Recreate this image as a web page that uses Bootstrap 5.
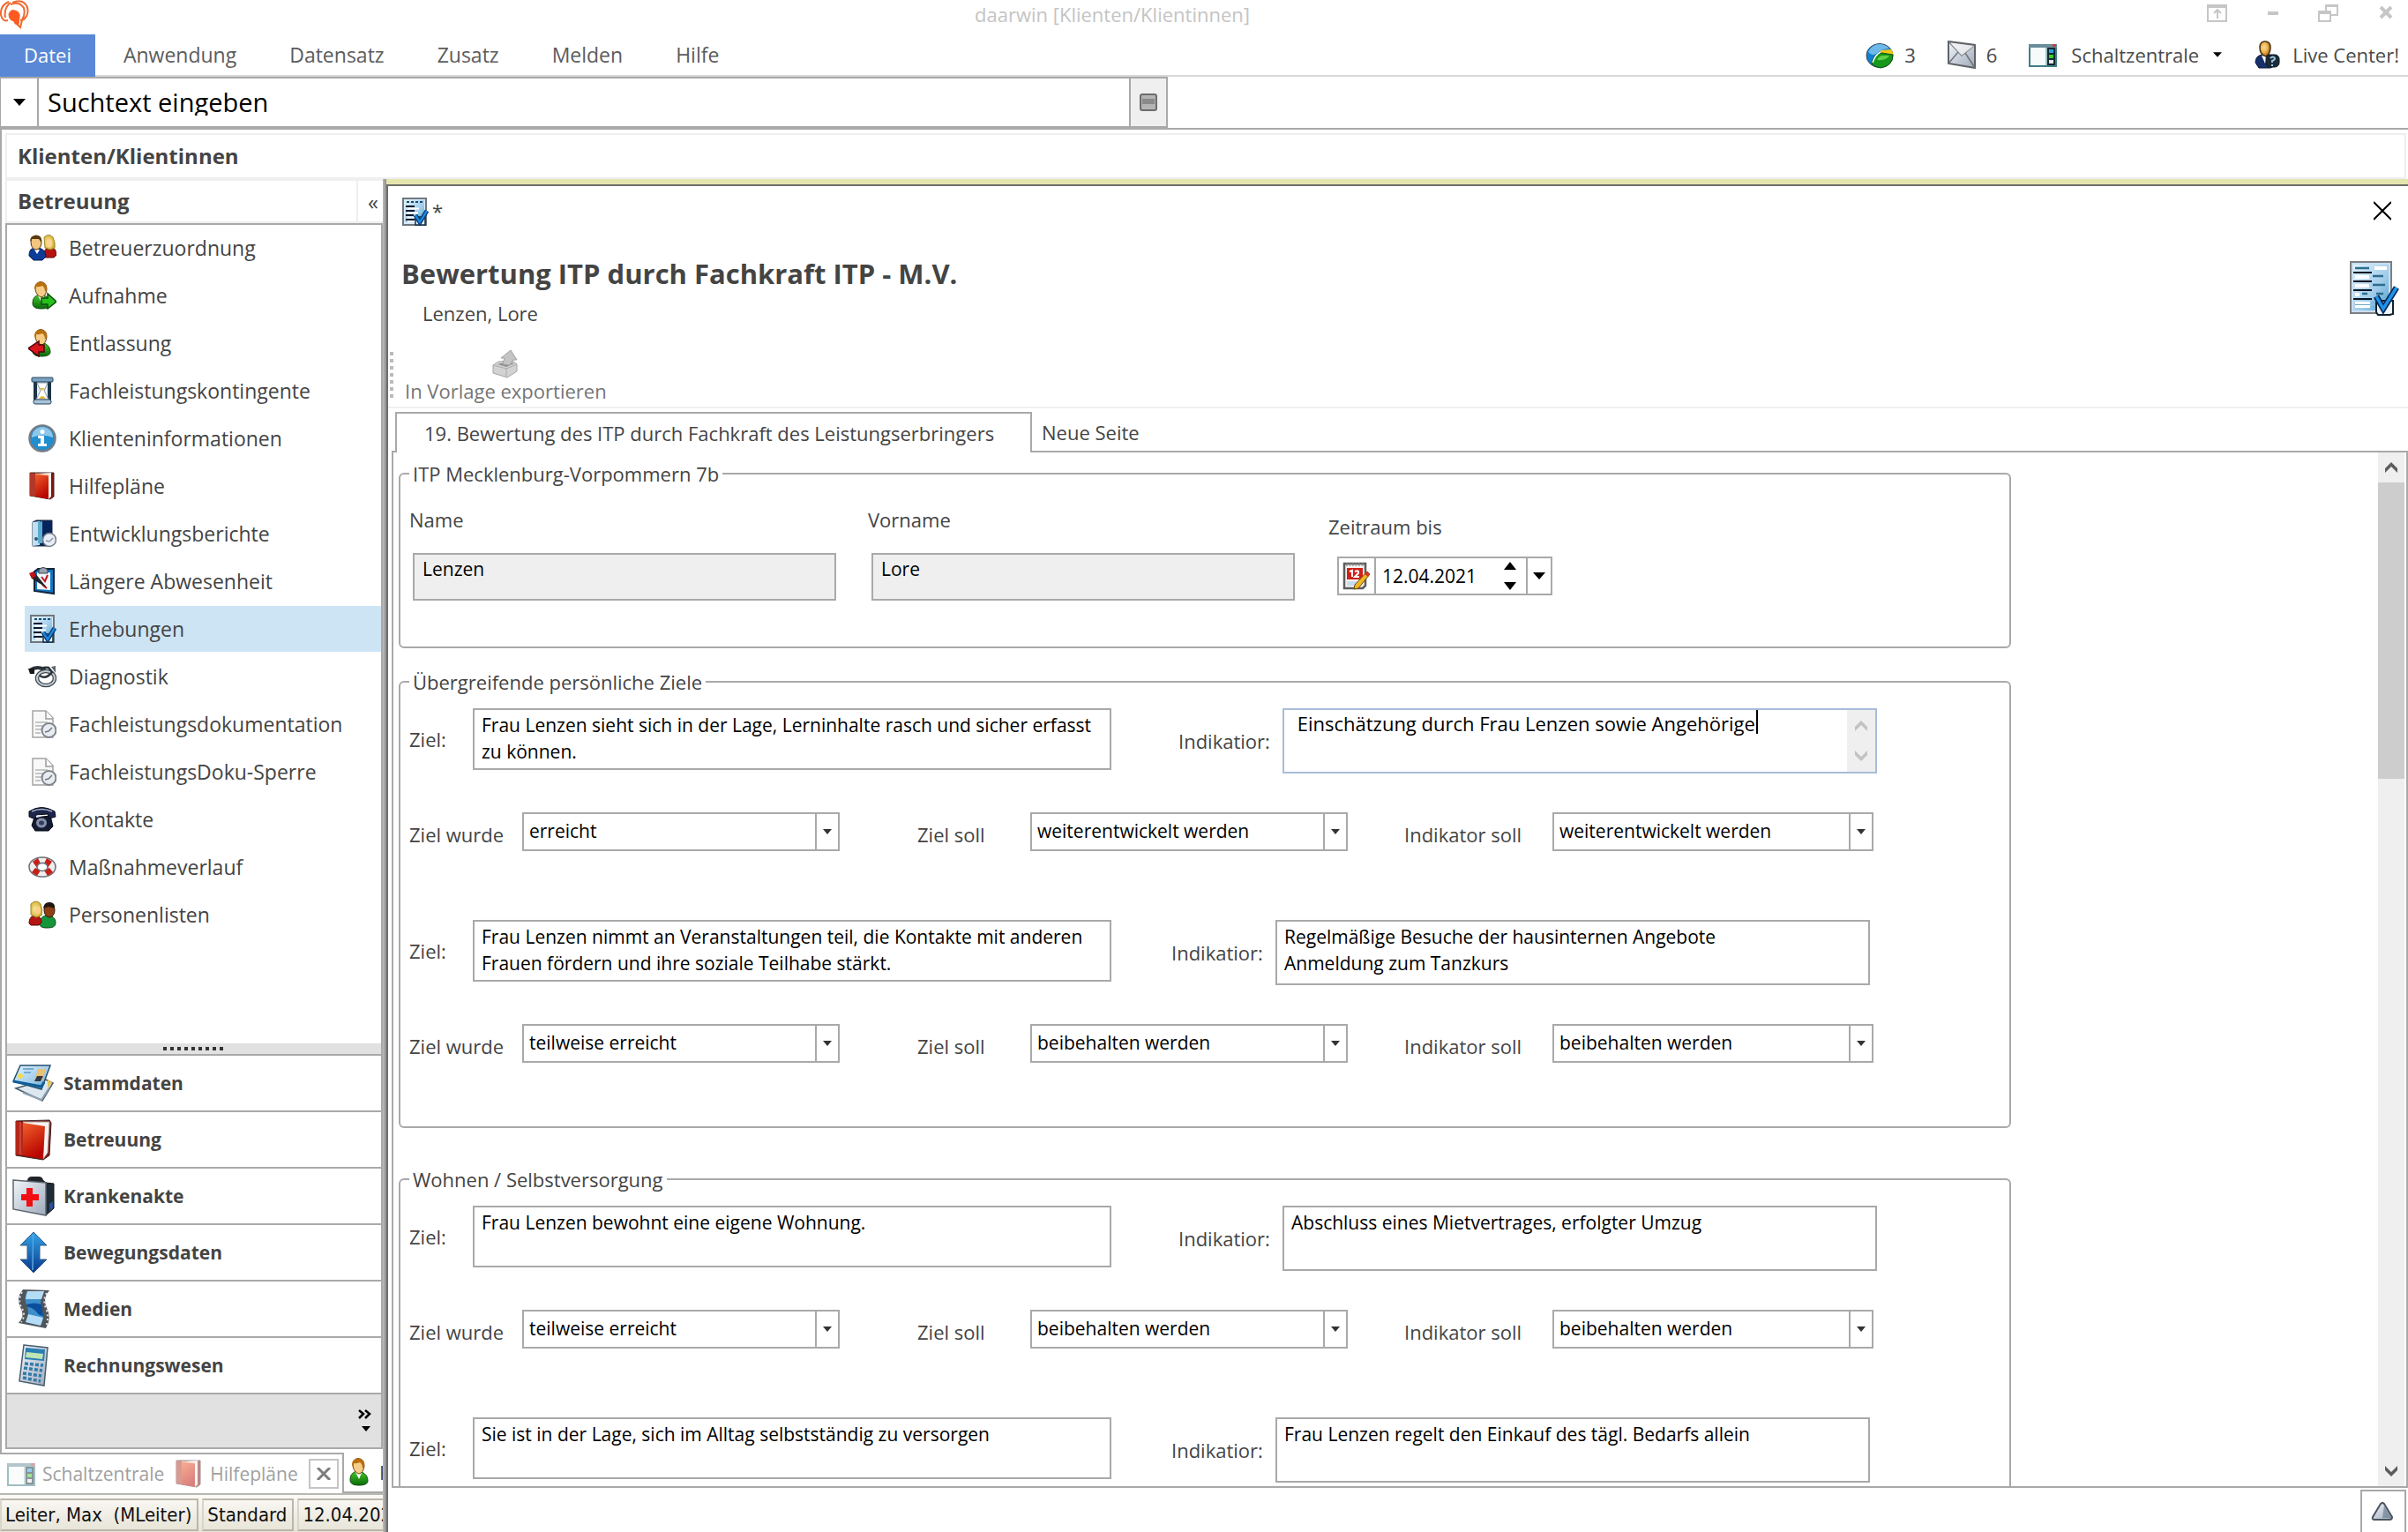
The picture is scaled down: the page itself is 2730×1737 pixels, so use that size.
<!DOCTYPE html>
<html lang="de">
<head>
<meta charset="utf-8">
<meta name="viewport" content="width=device-width, initial-scale=1">
<title>daarwin [Klienten/Klientinnen]</title>
<link href="https://cdn.jsdelivr.net/npm/bootstrap@5.3.0/dist/css/bootstrap.min.css" rel="stylesheet">
<style>
:root{--line:#a9a9a9;--soft:#efefef;--ink:#444}
body{font-family:"Open Sans","Noto Sans",sans-serif;font-size:22px;line-height:30px;color:var(--ink);background:#fff;overflow:hidden}
svg{flex:none;display:block}
button{font:inherit;color:inherit;background:none;border:0;padding:0}
a{color:inherit;text-decoration:none}
.ic{width:32px;height:32px}
.ic-lg{width:48px;height:48px}
.fill-rest{flex:1 1 0;min-height:0}
/* title bar and menu */
.caption-bar{height:39px;color:#c4c4c4;line-height:32px}
.caption-tools{width:241px;padding-left:13px;gap:45px}
.menu-bar{height:48px;border-bottom:2px solid #d8d8d8;color:#5c5c5c}
.menu-bar .nav-link{color:inherit;padding:8px 30px;font-size:23px}
.menu-bar .file-tab{background:#5b88d6;color:#fff;height:48px;padding:8px 27px;margin-right:2px;font-size:22px}
.menu-status{color:#4a4a4a;gap:36px;padding-right:10px}
.menu-status .tally{gap:12px}
/* search */
.search-row{height:60px;border-bottom:2px solid var(--line)}
.search-box{width:1324px;border:2px solid var(--line);border-left-width:1px}
.search-box .drop{width:43px;border-right:2px solid var(--line)}
.search-box input{font-size:29px;color:#000;border:0;padding:0 10px;outline:0;min-width:0}
.search-box .go{width:42px;background:#efefef;border-left:2px solid var(--line)}
/* page header */
.page-head{height:56px;padding:4px 2px 0 4px;border-left:2px solid var(--line)}
.page-head h1{font-size:24px;line-height:48px;padding-left:12px;margin:0;font-weight:700;border:2px solid var(--soft)}
/* sidebar */
.side{width:434px}
.side-frame{border-left:2px solid var(--line);padding:0 0 4px 4px}
.side-head{border:2px solid var(--soft);border-right:0;height:50px}
.side-head h2{font-size:24px;line-height:46px;padding-left:12px;margin:0;font-weight:700}
.side-head button{width:30px;border-left:2px solid var(--soft);font-size:24px;padding:2px 0 0 6px}
.side-box{border:2px solid var(--line)}
.side-list a{height:52px;margin:0 0 2px 20px;padding-left:4px;gap:14px;font-size:23px}
.side-list a.current{background:#cde4f5}
.grip{height:12px;background:#e1e1e1}
.group-link{height:64px;border-top:2px solid var(--line);font-size:21px;font-weight:700;padding-left:6px;gap:10px}
.side-more{height:62px;border-top:2px solid var(--line);background:#e1e1e1;padding-right:10px}
.doc-tabs{height:46px}
.doc-tabs .idle{width:388px;border-top:2px solid var(--line);color:#a0a0a0;padding-left:8px;gap:8px;font-size:21px}
.doc-tabs .idle svg{opacity:.5}
.doc-tabs .closer{width:34px;height:34px;border:2px solid #c4c4c4}
.doc-tabs .live{border-left:2px solid var(--line);border-bottom:2px solid var(--line);padding-left:2px;gap:6px}
.status{height:44px;border-top:2px solid #b9b8b0;background:linear-gradient(#fbfaf6,#e6e3d6);padding-top:4px;gap:4px;font-family:"DejaVu Sans Condensed",sans-serif;color:#111;white-space:pre}
.status span{border:2px solid #b9b7aa;border-left-color:#d8d6cb;height:37px;padding:0 6px 0 4px;line-height:34px}
/* dialog window */
.edge{width:4px;background:linear-gradient(90deg,#bdbdbd,#8d8d8d)}
.dialog-win{border-top:6px solid #e5e5ae;min-width:0}
.dialog-inner{border:solid #6e6e66;border-width:2px 0 0 2px;background:#fff}
.dialog-cap{height:58px;padding:13px 19px 0 14px}
.dialog-head{padding:19px 10px 0 15px}
.dialog-head h3{font-size:31px;line-height:44px;font-weight:700;margin:0 0 8px}
.dialog-head p{margin:0;padding-left:24px}
.tool-strip{margin-top:25px;height:68px;border-bottom:2px solid #f1f1f1;padding:2px 0 0 2px}
.tool-strip .dots{width:4px;height:54px;margin-top:2px;background:repeating-linear-gradient(#bbb 0 4px,transparent 4px 8px)}
.tool-strip button{margin-left:13px;line-height:28px;color:#757575}
.sheet-tabs{margin:4px 0 -2px 8px;height:46px;position:relative}
.sheet-tabs button{padding:0 14px 0 11px}
.sheet-tabs .on{width:722px;border:2px solid var(--line);border-bottom:0;background:#fff;padding:0 14px 0 31px}
.sheet{margin-left:4px;border:2px solid var(--line)}
.sheet-body{padding:9px 6px 0 6px;overflow:hidden}
.sheet-scroll{width:30px;margin-right:2px;background:#efefef}
.sheet-scroll .thumb{height:336px;background:#cdcdcd}
.sheet-scroll button{height:34px}
.dialog-foot{height:50px;padding:2px 2px 0 0}
.dialog-foot button{width:52px;border:2px solid var(--line);border-bottom:0;padding-left:10px}
/* form groups */
.group{max-width:1828px;border:2px solid var(--line);border-radius:6px;padding-left:10px}
.group legend{float:none;width:auto;font-size:22px;line-height:30px;margin:0;padding:0 4px}
.group-person{margin-bottom:23px;padding-bottom:52px}
.group-goals{margin-bottom:43px;padding-bottom:72px}
.person-col{width:520px;padding-top:22px}
.person-col input{margin:23px 0 0 4px;width:480px;height:54px;border:2px solid var(--line);background:#efefef;color:#000;font-size:21px;padding:0 9px 18px}
.period{padding:30px 0 0 2px}
.date-box{margin:19px 0 0 10px;width:244px;height:44px;border:2px solid var(--line)}
.date-box .cal{width:42px;border-right:2px solid var(--line)}
.date-box input{width:134px;border:0;outline:0;color:#000;font-size:21px;padding:0 0 0 7px}
.date-box .spin{width:36px}
.date-box .pick{width:28px;border-left:2px solid var(--line)}
.goal-text{padding-top:15px}
.goal-text label{flex:none}
.goal-text .aim{height:70px}
.goal-text .aim label{width:72px}
.goal-text .mark-by{height:74px;margin-left:76px}
.goal-text .mark-by label{width:118px}
.goal-text.near .mark-by{margin-left:68px}
.goal-text textarea{display:block;resize:none;overflow:hidden;border:2px solid var(--line);color:#000;background:#fff;font-size:21px;line-height:30px;padding:2px 8px;outline:0}
.aim textarea{width:724px;height:70px}
.mark-by textarea{width:674px;height:74px}
.active-box{width:674px;height:74px;border:2px solid #a9bcd9;position:relative}
.active-box textarea{flex:1;width:auto;height:70px;border:0;font-size:22px;padding:0 4px 0 9px;min-width:0}
.active-box .rail{width:32px;background:#efefef}
.caret{position:absolute;left:535px;top:0;width:2px;height:27px;background:#000}
.goal-pick{margin-top:44px;margin-bottom:63px}
.goal-pick:last-child{margin-bottom:0}
.goal-pick label{width:128px;padding-top:10px}
.goal-pick select{width:360px;height:44px;border:2px solid var(--line);border-radius:0;color:#000;font-size:21px;padding:0 34px 2px 6px;appearance:none;outline:0;background:url("data:image/svg+xml,%3Csvg xmlns='http://www.w3.org/2000/svg' width='10' height='6'%3E%3Cpath d='M0 0h10L5 6z' fill='%23333'/%3E%3C/svg%3E") no-repeat right 7px center,linear-gradient(var(--line),var(--line)) no-repeat right 24px top/2px 100%,#fff}
.goal-pick .second{margin-left:88px}
.goal-pick .third{margin-left:64px}
.goal-pick .third label{width:168px}
.goal-pick .third select{width:364px}
</style>
</head>
<body>
<svg width="0" height="0" class="position-absolute" aria-hidden="true">
<defs>
<linearGradient id="gRed" x1="0" y1="0" x2="0.4" y2="1"><stop offset="0" stop-color="#f2602a"/><stop offset="1" stop-color="#b80500"/></linearGradient>
<linearGradient id="gBlue" x1="0" y1="0" x2="0" y2="1"><stop offset="0" stop-color="#33a5e8"/><stop offset="1" stop-color="#06378f"/></linearGradient>
<linearGradient id="gSky" x1="0" y1="0" x2="1" y2="1"><stop offset="0" stop-color="#e2f3ff"/><stop offset=".6" stop-color="#9fcbea"/><stop offset="1" stop-color="#4aa0c8"/></linearGradient>
<linearGradient id="gSteel" x1="0" y1="0" x2="1" y2="1"><stop offset="0" stop-color="#f2f6fb"/><stop offset="1" stop-color="#9fa9bb"/></linearGradient>
<linearGradient id="gGreen" x1="0" y1="0" x2="0" y2="1"><stop offset="0" stop-color="#46c828"/><stop offset="1" stop-color="#0a6a0c"/></linearGradient>
<radialGradient id="gHair" cx=".4" cy=".4" r=".7"><stop offset="0" stop-color="#fbd79a"/><stop offset=".45" stop-color="#eeb650"/><stop offset="1" stop-color="#8a4b08"/></radialGradient>
<radialGradient id="gBlond" cx=".4" cy=".5" r=".7"><stop offset="0" stop-color="#fde9a2"/><stop offset="1" stop-color="#c9a113"/></radialGradient>
</defs>
<symbol id="i-pair" viewBox="0 0 32 32"><path d="M18 24c0-6 3-9 7-9s7 4 7 9l-3 3H18z" fill="#b5120e" stroke="#5c0808"/><path d="M18 4q5-5 10 0 3 6 2 12l-5 2-6-2z" fill="url(#gBlond)" stroke="#9b8a2a"/><ellipse cx="24" cy="11" rx="3" ry="4.500" fill="#fbd596"/><path d="M1 25c0-7 3-9 8-9s11 2 11 10l-4 4H6z" fill="#0c3c98" stroke="#051c52"/><path d="M7 18l3 5 3-5z" fill="#fff"/><ellipse cx="9" cy="10" rx="6" ry="8" fill="#f3c67f" stroke="#5a3a10"/><path d="M2 9q0-8 8-7 6 0 5 8l-3-4-8 0z" fill="#58380f"/></symbol>
<symbol id="i-person" viewBox="0 0 32 32"><path d="M5 25c0-6 3-9 8-10 6 0 12 4 12 11 0 3-3 5-10 5S5 29 5 25z" fill="url(#gGreen)" stroke="#124d10"/><path d="M11 16l4 8 3-7z" fill="#fff"/><path d="M8 9q0-8 6-8.500Q21 1 21 9q-1 8-6 9-6-2-7-9z" fill="#f6cd86" stroke="#6a4212"/><path d="M7 10Q6 1 14 .5 22 1 21 9l-2 3q0-5-3-7-5 2-7 1z" fill="#b8700f"/></symbol>
<symbol id="i-in" viewBox="0 0 32 32"><use href="#i-person"/><path d="M15 19h7v-5l10 9-10 8v-5h-7z" fill="#27c01c" stroke="#0b4f08" stroke-width="1.500"/></symbol>
<symbol id="i-out" viewBox="0 0 32 32"><use href="#i-person"/><path d="M18 18h-6v-4L0 22l12 9v-5h6z" fill="#d8141c" stroke="#4f0508" stroke-width="1.500"/></symbol>
<symbol id="i-glass" viewBox="0 0 32 32"><path d="M6 6h20v22H6z" fill="#e8eef4"/><path d="M6 6h4v21H6zM22 6h4v21h-4z" fill="#1c3547"/><path d="M10 7h12l-4 9 5 10H9l5-10z" fill="#fff" stroke="#8a9cab"/><path d="M13 13h6l-3 3zM12 25q4-6 8 0z" fill="#e6b43c"/><rect x="4" y="1" width="24" height="5" rx="1" fill="#7ba2c0" stroke="#26455c"/><rect x="6" y="26" width="20" height="5" rx="2" fill="#a9c4d8" stroke="#26455c"/></symbol>
<symbol id="i-info" viewBox="0 0 32 32"><circle cx="16" cy="16" r="14.500" fill="#1f8fd0" stroke="#727d86" stroke-width="2.500"/><path d="M4 15a12 12 0 0 1 24 0q-12-5-24 0z" fill="#8cc7ea"/><circle cx="16" cy="8.500" r="2.500" fill="#fff"/><path d="M11 13h7v9h3v3H11v-3h3v-6h-3z" fill="#fff"/></symbol>
<symbol id="i-book" viewBox="0 0 32 32"><path d="M2 1h27v27l-4 3-23-4z" fill="#7d1510" stroke="#3e2a28"/><path d="M9 2l17-1v27l-3 3-2-1z" fill="#f6efec"/><path d="M8 2l15 2v27L8 28z" fill="url(#gRed)"/><path d="M2 1l6 1v26l-6-1z" fill="#b3372a"/><path d="M8 2l15 2" stroke="#ffb28c"/></symbol>
<symbol id="i-binder" viewBox="0 0 32 32"><path d="M5 3l4-2h18v24l-4 5H5z" fill="#06245c" stroke="#1d2a3c"/><path d="M5 3l8-1v27l-8 1z" fill="#bfe0f2"/><path d="M11 3l5-1v25h-5z" fill="#5cabcf"/><circle cx="9" cy="22" r="2" fill="#37576c"/><circle cx="24" cy="23" r="7.500" fill="#e9edf5" stroke="#737b8a" stroke-width="1.500"/><path d="M20 24l4 1 4-4" fill="none" stroke="#8d96a6" stroke-width="1.500"/></symbol>
<symbol id="i-clip" viewBox="0 0 32 32"><path d="M7 5l4-3h18v28l-22-3z" fill="#1176c0" stroke="#12233c" stroke-width="2"/><path d="M10 6h15v20l-15-1z" fill="#f3f8fc"/><path d="M12 3q5-5 10 0v4H12z" fill="#99a2ac" stroke="#38424e"/><path d="M15 11l4 5 3-7M16 20l5 4" fill="none" stroke="#c3131a" stroke-width="2"/><path d="M2 8l5-2 14 17-4-2L4 13z" fill="#23252c"/><path d="M1 7l5-2 3 5-5 3z" fill="#c4121a"/></symbol>
<symbol id="i-form" viewBox="0 0 32 32"><path d="M3 1h26v30H3z" fill="#d7eaf8" stroke="#70777e" stroke-width="2"/><path d="M5 3h22v25H5z" fill="url(#gSky)"/><path d="M7 5h3M12 5h3M17 5h3M22 5h3" stroke="#174c6a" stroke-width="2"/><path d="M6 10h10M6 15h10M6 20h9M6 25h10" stroke="#0b1a2c" stroke-width="2"/><path d="M8 12.500h13M8 17.500h12M8 22.500h8M8 27h9" stroke="#fff" stroke-width="2"/><path d="M17 22h11v9H17z" fill="#e7f3fb" stroke="#142b3c" stroke-width="1.500"/><path d="M17 20l5 8 8-13" fill="none" stroke="#06346a" stroke-width="5"/><path d="M17 20l5 8 8-13" fill="none" stroke="#1b86dc" stroke-width="2.500"/></symbol>
<symbol id="i-form-lg" viewBox="0 0 56 62"><path d="M1 1h46v58H1z" fill="#c9def0" stroke="#7c7f82" stroke-width="2"/><path d="M4 4h40v52H4z" fill="url(#gSky)"/><path d="M6 8h16M26 17h12M26 27h14M14 37h6M30 37h8" stroke="#2b6c8c" stroke-width="2.500"/><path d="M4 13h21M4 23h21M4 33h21M4 43h21" stroke="#0a1422" stroke-width="2"/><path d="M28 6h14v4H28zM6 16h16v4H6zM6 26h16v4H6zM6 36h5v4H6zM6 46h17v7H6z" fill="#fff"/><path d="M6 49.500h17M28 47h-3M28 52h-3" stroke="#6fa3c4"/><path d="M30 45h19v15l-4 1H32l-2-3z" fill="#f2f7fa" stroke="#10222f" stroke-width="2"/><path d="M30 40l8 14 15-24" fill="none" stroke="#082a5a" stroke-width="7"/><path d="M30 40l8 14 15-24" fill="none" stroke="#1f93ea" stroke-width="3.500"/></symbol>
<symbol id="i-steth" viewBox="0 0 32 32"><path d="M2 9q9-6 17 0" fill="none" stroke="#2b333b" stroke-width="4"/><path d="M0 7h7v6H2z" fill="#15191e"/><ellipse cx="20" cy="18" rx="10" ry="8" fill="none" stroke="#3d464e" stroke-width="4.500"/><ellipse cx="20" cy="18" rx="10" ry="8" fill="none" stroke="#c3ccd3" stroke-width="2"/><path d="M13 15q7 5 14-4l-4-5q-7-1-9 2" fill="none" stroke="#2b333b" stroke-width="2.500"/><path d="M26 5l5-1v8z" fill="#5b666f"/></symbol>
<symbol id="i-doc" viewBox="0 0 32 32"><path d="M5 1h15l8 8v22H5z" fill="#f8f8f8" stroke="#a4a4a4" stroke-width="1.500"/><path d="M20 1v9h8" fill="#fff" stroke="#9a9a9a" stroke-width="1.500"/><path d="M8 14h14M8 18h9M8 22h7M8 26h6" stroke="#c6c6c6" stroke-width="2"/><circle cx="23.500" cy="23" r="8" fill="#e8ecf0" stroke="#7c848c" stroke-width="2"/><path d="M19 25l4-1 4-4" fill="none" stroke="#6f7880" stroke-width="1.500"/></symbol>
<symbol id="i-phone" viewBox="0 0 32 32"><path d="M7 14l18-2 3 12-5 5H8l-4-6z" fill="#151b33" stroke="#050812"/><path d="M1 7q14-9 29 0l1 6-7 2-2-5-13 1-1 5-7-3z" fill="#1d264a" stroke="#060916"/><ellipse cx="15" cy="20" rx="6" ry="5.500" fill="#8790ab"/><ellipse cx="15" cy="20" rx="3" ry="2.500" fill="#333c5c"/><path d="M4 7q11-5 23 0" stroke="#aab3d0" fill="none" stroke-width="1.500"/><path d="M9 13l5-1" stroke="#e4e8f5" stroke-width="2"/></symbol>
<symbol id="i-ring" viewBox="0 0 32 32"><ellipse cx="16" cy="16" rx="15" ry="11" fill="#eceeef" stroke="#6c7074" stroke-width="1.500"/><path d="M5 10l6-4 4 8-5 3zM27 10l-6-4-4 8 5 3zM4 22l6 4 4-6-6-3zM28 22l-6 4-4-6 6-3z" fill="#c81d16"/><ellipse cx="16" cy="16" rx="6" ry="4.500" fill="#fff" stroke="#6c7074" stroke-width="1.500"/></symbol>
<symbol id="i-people" viewBox="0 0 32 32"><path d="M13 26c0-6 4-9 9-9s9 3 9 8-4 6-10 6-8-2-8-5z" fill="#14953a" stroke="#0b4a18"/><ellipse cx="24" cy="11" rx="6" ry="8" fill="#8e3f14" stroke="#32180a"/><path d="M17 9q1-8 8-7 6 1 5 7l-7-2z" fill="#20160f"/><path d="M1 26c0-6 3-9 7-9s7 3 7 8l-3 3H3z" fill="#b51512" stroke="#5c0808"/><path d="M3 4q6-6 11 0 3 7 1 13l-6 2-6-3z" fill="url(#gBlond)" stroke="#9b8a2a"/><ellipse cx="11" cy="11" rx="3" ry="4.500" fill="#fbd08c"/></symbol>
<symbol id="i-cards" viewBox="0 0 48 48"><path d="M4 30l30 14 12-20-8-4z" fill="#dde7ef" stroke="#4b5c6a" stroke-width="1.500"/><path d="M12 35l21 8 9-14" fill="none" stroke="#8fa3b4" stroke-width="2"/><path d="M40 20l5 3-5 7z" fill="#e4c455"/><path d="M9 4h34L33 31 1 22z" fill="url(#gSky)" stroke="#27506e" stroke-width="1.500"/><path d="M1 22l32 6 3-5" fill="none" stroke="#0f5d9a" stroke-width="3"/><path d="M29 8h9l-4 13h-9z" fill="#e9c177"/><path d="M28 16h7l-3 6h-7z" fill="#2e3b44"/><circle cx="9" cy="16" r="3" fill="#efdc55"/><path d="M12 8h12M13 12h8" stroke="#5a9cc8" stroke-width="1.500"/></symbol>
<symbol id="i-book-lg" viewBox="0 0 48 48"><path d="M4 3l38-1 2 3-2 37-7 5-31-5z" fill="#861008" stroke="#3e2a28"/><path d="M12 4h30l-2 35-5 7z" fill="#f8f4f2" stroke="#a79b98"/><path d="M12 5l25 4-2 37-23-4z" fill="url(#gRed)"/><path d="M4 3l8 2v37l-8-1z" fill="#b3271b"/><path d="M9 4v37" stroke="#e0644c"/></symbol>
<symbol id="i-kit" viewBox="0 0 48 48"><path d="M17 6q1-4 5-4h8q4 0 5 4l4 3H14z" fill="#202429"/><path d="M38 9l9 1v28l-9 8z" fill="#1f2b35" stroke="#101820"/><path d="M1 6l37 3v37L1 39z" fill="url(#gSteel)" stroke="#5d6770" stroke-width="1.500"/><path d="M16 15h7v7h7v7h-7v7h-7v-7h-6v-7h6z" fill="#f20d12"/><path d="M42 33l4-3v8l-4 3z" fill="#2a4f96"/></symbol>
<symbol id="i-updown" viewBox="0 0 48 48"><path d="M24 1l15 15h-8v16h8L24 47 9 32h8V16H9z" fill="url(#gBlue)" stroke="#3a5d80"/><path d="M23 4l1 0v40h-2z" fill="#7cc4ee" opacity=".6"/></symbol>
<symbol id="i-film" viewBox="0 0 48 48"><path d="M12 2l30 1q-8 9-3 20 6 12-1 23L7 40q8-8 2-18-5-11 3-20z" fill="#50555a"/><path d="M17 4l19 0q-6 9-3 19 4 12-1 20l-17-4q5-8 2-17-5-11 0-18z" fill="#3c8fcb"/><path d="M17 4h19l-3 9-18 0zM15 39l3-9 17 4-3 9z" fill="#b5dcf6"/><path d="M16 19q9-3 17 0l2 13q-5 0-8-5-5-5-10-5z" fill="#0b4f9c"/><path d="M11 5q-5 8-1 17 6 9 0 17M39 6q-5 8-1 17 4 12 0 21" fill="none" stroke="#e1e4e7" stroke-width="2" stroke-dasharray="2 3"/></symbol>
<symbol id="i-calc" viewBox="0 0 48 48"><path d="M13 1l27 3-4 43-28-5z" fill="url(#gSteel)" stroke="#46606f" stroke-width="1.500"/><path d="M15 4l22 2-1 13-22-2z" fill="#2a7fb4"/><path d="M16 9l19 2-1 6-19-2z" fill="#bfe6b4"/><path d="M14 22l21 2M13 27l21 3M12 33l21 3M12 38l20 4" stroke="#2f7ba8" stroke-width="3.500" stroke-dasharray="4 2"/></symbol>
<symbol id="i-panel" viewBox="0 0 32 32"><path d="M1 5h30v24H1z" fill="#f6fafa" stroke="#3f7f86" stroke-width="2"/><path d="M0 4h32v4H0z" fill="#6a8d9a"/><path d="M27 4h4v3h-4z" fill="#d23a36"/><path d="M19 8h2v20h-2z" fill="#9dc3c6"/><path d="M21 8h9v20h-9z" fill="#132a34"/><path d="M23 10h5v4h-5z" fill="#2e9fe4"/><path d="M23 16h5v4h-5z" fill="#3bd01e"/><path d="M23 22h5v4h-5z" fill="#e6e6e6"/></symbol>
<symbol id="i-globe" viewBox="0 0 32 32"><ellipse cx="16" cy="17" rx="15" ry="13.500" fill="#0f7fd0" stroke="#3c4a56"/><path d="M3 13q4-9 14-9 7 1 10 5-9 0-15 6-5 3-9-2z" fill="#6fb9ea"/><path d="M17 11l12-1q3 4 2 8H16z" fill="#f3c616"/><path d="M7 26q2-11 11-12l13 2q0 13-14 15-7-1-10-5z" fill="#16981a" stroke="#0b4f0e"/><path d="M13 22q2-5 7-5h7q-3 6-14 5z" fill="#5fd044"/><path d="M8 25q3-9 9-12" stroke="#fff" stroke-width="1.500" fill="none"/></symbol>
<symbol id="i-mail" viewBox="0 0 32 32"><path d="M1 1l30 4v26L1 26z" fill="url(#gSteel)" stroke="#5f6266" stroke-width="2"/><path d="M1 1l15 16L31 5M1 26l11-13M31 31L20 14" fill="none" stroke="#707478" stroke-width="1.500"/><path d="M3 3l13 14L30 6z" fill="#f4f4f4" opacity=".7"/></symbol>
<symbol id="i-agent" viewBox="0 0 32 32"><path d="M2 25q0-8 8-9h8q8 4 7 12l-6 3H6z" fill="#16306e" stroke="#0a1630"/><path d="M9 17l4 9 3-8z" fill="#fff"/><path d="M7 8q0-7 6-7t6 7-5 10q-7-2-7-10z" fill="url(#gHair)" stroke="#4d2f0c" stroke-width="1.500"/><rect x="14" y="16" width="15" height="14" rx="5" fill="#1d2c38" stroke="#0d161e"/><path d="M19 20q3-3 5 0 0 2-3 3v2M21 27v2" fill="none" stroke="#9fc6de" stroke-width="2"/></symbol>
<symbol id="i-export" viewBox="0 0 32 32"><path d="M2 17l6-4 16-1 5 4v8L18 31 2 26z" fill="#d2d2d2" stroke="#a6a6a6"/><path d="M2 17l15 4 12-5M17 21v10" fill="none" stroke="#ababab"/><path d="M7 16l12-3 7 2-9 4z" fill="#8e8e8e"/><path d="M13 16l2-7h-4L22 0l7 11h-4l-4 6z" fill="#c4c4c4" stroke="#a2a2a2"/></symbol>
<symbol id="i-cal" viewBox="0 0 32 32"><path d="M2 2h24v25l-3 3H2z" fill="#f2f2f2" stroke="#5c5c5c" stroke-width="2.500"/><path d="M4 3h20" stroke="#888" stroke-width="3" stroke-dasharray="2 1.500"/><path d="M5 7h18v13H5z" fill="#cf201a"/><path d="M8 11l3-1v7M14 11q5-2 4 2l-4 4h5" fill="none" stroke="#fff" stroke-width="2"/><path d="M5 22h12v5H5z" fill="#c9dcef"/><path d="M28 11l3 3-13 16-5 1 1-5z" fill="#f0b823" stroke="#70480a"/><path d="M28 11l3 3-2 3-4-3z" fill="#d33b24"/></symbol>
<symbol id="i-down" viewBox="0 0 14 8"><path d="M0 0h14L7 8z"/></symbol>
<symbol id="i-chev" viewBox="0 0 14 12"><path d="M0 12V7l7-7 7 7v5L7 5z"/></symbol>
</svg>

<div class="vh-100 d-flex flex-column">
  <header class="flex-shrink-0">
    <div class="caption-bar d-flex">
      <svg width="33" height="33" viewBox="0 0 33 33" fill="none" stroke="#f0692e"><path d="M10 2Q0 6 1 17q2 8 8 6M12 3q-8 6-6 17M14 3Q26-2 31 8q2 9-4 14l-4 1M12 5q10-4 15 4 2 8-2 13M18 26l5 5 2-8" stroke-width="2"/><path d="M10 16q2-6 7-4 6 1 5 8l-1 8q-5 0-5-4-6-1-6-8z" fill="#ff5a1f"/></svg>
      <div class="flex-fill text-center">daarwin [Klienten/Klientinnen]</div>
      <div class="caption-tools d-flex align-items-start pt-1">
        <button aria-label="Menüband minimieren"><svg width="24" height="22" viewBox="0 0 24 22" fill="none" stroke="#c6c6c6" stroke-width="2"><path d="M1 2h21v18H1zM1 4h21M12 17V8M8 11l4-4 4 4"/></svg></button>
        <button aria-label="Minimieren"><svg width="12" height="22" viewBox="0 0 12 22"><path d="M0 9h12v4H0z" fill="#c6c6c6"/></svg></button>
        <button aria-label="Wiederherstellen"><svg width="24" height="22" viewBox="0 0 24 22" fill="none" stroke="#c6c6c6" stroke-width="2"><path d="M1 9h13v11H1zM1 11h13M9 8V2h13v11h-7M9 3h13"/></svg></button>
        <button aria-label="Schließen"><svg width="16" height="22" viewBox="0 0 16 22"><path d="M2 4l12 12M14 4L2 16" stroke="#c6c6c6" stroke-width="4"/></svg></button>
      </div>
    </div>
    <nav class="menu-bar d-flex justify-content-between">
      <div class="d-flex">
        <a class="nav-link file-tab" href="#">Datei</a>
        <a class="nav-link" href="#">Anwendung</a>
        <a class="nav-link" href="#">Datensatz</a>
        <a class="nav-link" href="#">Zusatz</a>
        <a class="nav-link" href="#">Melden</a>
        <a class="nav-link" href="#">Hilfe</a>
      </div>
      <div class="menu-status d-flex align-items-center">
        <a class="tally d-flex align-items-center" href="#"><svg class="ic"><use href="#i-globe"/></svg>3</a>
        <a class="tally d-flex align-items-center" href="#"><svg class="ic"><use href="#i-mail"/></svg>6</a>
        <a class="d-flex align-items-center gap-3" href="#"><svg class="ic"><use href="#i-panel"/></svg>Schaltzentrale<svg width="10" height="6"><use href="#i-down"/></svg></a>
        <a class="tally d-flex align-items-center" href="#"><svg class="ic"><use href="#i-agent"/></svg>Live Center!</a>
      </div>
    </nav>
    <form class="search-row d-flex">
      <div class="search-box d-flex">
        <button type="button" class="drop d-flex align-items-center justify-content-center" aria-label="Suchbereich"><svg width="14" height="8"><use href="#i-down"/></svg></button>
        <input class="flex-fill" type="text" value="Suchtext eingeben" aria-label="Suche">
        <button type="button" class="go d-flex align-items-center justify-content-center" aria-label="Suchen"><svg width="20" height="20" viewBox="0 0 20 20"><rect x="1" y="1" width="18" height="18" rx="2" fill="#b4b4b4" stroke="#6c6c6c" stroke-width="2"/><path d="M3 6h14v6H3z" fill="#8a8a8a"/></svg></button>
      </div>
    </form>
  </header>

  <div class="page-head flex-shrink-0"><h1>Klienten/Klientinnen</h1></div>

  <div class="d-flex fill-rest">
    <aside class="side d-flex flex-column flex-shrink-0 overflow-hidden">
      <div class="side-frame d-flex flex-column fill-rest">
        <div class="side-head d-flex justify-content-between flex-shrink-0"><h2>Betreuung</h2><button aria-label="Einklappen">«</button></div>
        <div class="side-box d-flex flex-column fill-rest">
          <nav class="side-list fill-rest overflow-hidden">
            <a class="d-flex align-items-center" href="#"><svg class="ic"><use href="#i-pair"/></svg>Betreuerzuordnung</a>
            <a class="d-flex align-items-center" href="#"><svg class="ic"><use href="#i-in"/></svg>Aufnahme</a>
            <a class="d-flex align-items-center" href="#"><svg class="ic"><use href="#i-out"/></svg>Entlassung</a>
            <a class="d-flex align-items-center" href="#"><svg class="ic"><use href="#i-glass"/></svg>Fachleistungskontingente</a>
            <a class="d-flex align-items-center" href="#"><svg class="ic"><use href="#i-info"/></svg>Klienteninformationen</a>
            <a class="d-flex align-items-center" href="#"><svg class="ic"><use href="#i-book"/></svg>Hilfepläne</a>
            <a class="d-flex align-items-center" href="#"><svg class="ic"><use href="#i-binder"/></svg>Entwicklungsberichte</a>
            <a class="d-flex align-items-center" href="#"><svg class="ic"><use href="#i-clip"/></svg>Längere Abwesenheit</a>
            <a class="d-flex align-items-center current" href="#" aria-current="page"><svg class="ic"><use href="#i-form"/></svg>Erhebungen</a>
            <a class="d-flex align-items-center" href="#"><svg class="ic"><use href="#i-steth"/></svg>Diagnostik</a>
            <a class="d-flex align-items-center" href="#"><svg class="ic"><use href="#i-doc"/></svg>Fachleistungsdokumentation</a>
            <a class="d-flex align-items-center" href="#"><svg class="ic"><use href="#i-doc"/></svg>FachleistungsDoku-Sperre</a>
            <a class="d-flex align-items-center" href="#"><svg class="ic"><use href="#i-phone"/></svg>Kontakte</a>
            <a class="d-flex align-items-center" href="#"><svg class="ic"><use href="#i-ring"/></svg>Maßnahmeverlauf</a>
            <a class="d-flex align-items-center" href="#"><svg class="ic"><use href="#i-people"/></svg>Personenlisten</a>
          </nav>
          <div class="grip d-flex align-items-center justify-content-center"><svg width="70" height="4"><path d="M0 2h70" stroke="#333" stroke-width="4" stroke-dasharray="4 4"/></svg></div>
          <a class="group-link d-flex align-items-center" href="#"><svg class="ic-lg"><use href="#i-cards"/></svg>Stammdaten</a>
          <a class="group-link d-flex align-items-center" href="#"><svg class="ic-lg"><use href="#i-book-lg"/></svg>Betreuung</a>
          <a class="group-link d-flex align-items-center" href="#"><svg class="ic-lg"><use href="#i-kit"/></svg>Krankenakte</a>
          <a class="group-link d-flex align-items-center" href="#"><svg class="ic-lg"><use href="#i-updown"/></svg>Bewegungsdaten</a>
          <a class="group-link d-flex align-items-center" href="#"><svg class="ic-lg"><use href="#i-film"/></svg>Medien</a>
          <a class="group-link d-flex align-items-center" href="#"><svg class="ic-lg"><use href="#i-calc"/></svg>Rechnungswesen</a>
          <div class="side-more d-flex align-items-center justify-content-end"><button aria-label="Weitere Gruppen"><svg width="16" height="26" viewBox="0 0 16 26"><path d="M1 1l5 4-5 5M8 1l5 4-5 5" fill="none" stroke="#000" stroke-width="2.500"/><path d="M4 19h10l-5 6z"/></svg></button></div>
        </div>
      </div>
      <div class="doc-tabs d-flex flex-shrink-0">
        <div class="idle d-flex align-items-center flex-shrink-0"><svg class="ic"><use href="#i-panel"/></svg><a href="#">Schaltzentrale</a><svg class="ic ms-1"><use href="#i-book"/></svg><a href="#">Hilfepläne</a><button class="closer d-flex align-items-center justify-content-center ms-1" aria-label="Tab schließen"><svg width="18" height="14" viewBox="0 0 18 14"><path d="M2 0l14 14M16 0L2 14" stroke="#000" stroke-width="3"/></svg></button></div>
        <a class="live d-flex align-items-center flex-fill" href="#"><svg class="ic"><use href="#i-person"/></svg>K</a>
      </div>
      <div class="status d-flex flex-shrink-0"><span>Leiter, Max  (MLeiter)</span><span>Standard</span><span>12.04.2021</span></div>
    </aside>

    <div class="edge flex-shrink-0"></div>

    <section class="dialog-win flex-fill d-flex flex-column">
      <div class="dialog-inner d-flex flex-column fill-rest">
        <div class="dialog-cap d-flex justify-content-between flex-shrink-0">
          <div class="d-flex gap-1"><svg class="ic"><use href="#i-form"/></svg><span>*</span></div>
          <button class="align-self-start pt-1" aria-label="Fenster schließen"><svg width="20" height="22" viewBox="0 0 20 22"><path d="M0 1l20 20M20 1L0 21" stroke="#000" stroke-width="2"/></svg></button>
        </div>
        <div class="dialog-head d-flex justify-content-between align-items-start flex-shrink-0">
          <div><h3>Bewertung ITP durch Fachkraft ITP - M.V.</h3><p>Lenzen, Lore</p></div>
          <svg class="mt-2" width="56" height="62"><use href="#i-form-lg"/></svg>
        </div>
        <div class="tool-strip d-flex align-items-start flex-shrink-0">
          <div class="dots"></div>
          <button class="d-flex flex-column align-items-center" disabled><svg class="ic"><use href="#i-export"/></svg>In Vorlage exportieren</button>
        </div>
        <div class="sheet-tabs d-flex flex-shrink-0" role="tablist">
          <button class="on text-start" role="tab" aria-selected="true">19. Bewertung des ITP durch Fachkraft des Leistungserbringers</button>
          <button role="tab" aria-selected="false">Neue Seite</button>
        </div>
        <div class="sheet d-flex fill-rest">
          <form class="sheet-body flex-fill">
            <fieldset class="group group-person">
              <legend>ITP Mecklenburg-Vorpommern 7b</legend>
              <div class="d-flex">
                <div class="person-col"><label class="d-block" for="nm">Name</label><input id="nm" type="text" value="Lenzen" readonly></div>
                <div class="person-col"><label class="d-block" for="vn">Vorname</label><input id="vn" type="text" value="Lore" readonly></div>
                <div class="period"><label class="d-block" for="zb">Zeitraum bis</label>
                  <div class="date-box d-flex">
                    <button type="button" class="cal d-flex align-items-center justify-content-center" aria-label="Kalender"><svg class="ic"><use href="#i-cal"/></svg></button>
                    <input id="zb" type="text" value="12.04.2021">
                    <button type="button" class="spin d-flex flex-column align-items-center justify-content-between py-1" aria-label="Tag ändern"><svg width="14" height="9" viewBox="0 0 14 9"><path d="M0 9h14L7 0z"/></svg><svg width="14" height="9" viewBox="0 0 14 9"><path d="M0 0h14L7 9z"/></svg></button>
                    <button type="button" class="pick d-flex align-items-center justify-content-center" aria-label="Datum wählen"><svg width="14" height="8"><use href="#i-down"/></svg></button>
                  </div>
                </div>
              </div>
            </fieldset>

            <fieldset class="group group-goals">
              <legend>Übergreifende persönliche Ziele</legend>
              <div class="goal-text d-flex">
                <div class="aim d-flex align-items-center"><label for="z1">Ziel:</label><textarea id="z1">Frau Lenzen sieht sich in der Lage, Lerninhalte rasch und sicher erfasst zu können.</textarea></div>
                <div class="mark-by d-flex align-items-center"><label for="i1">Indikatior:</label>
                  <div class="active-box d-flex"><textarea id="i1"> Einschätzung durch Frau Lenzen sowie Angehörige</textarea><span class="caret"></span>
                    <div class="rail d-flex flex-column align-items-center justify-content-between py-2"><svg class="mt-1" width="14" height="12" fill="#c2c2c2"><use href="#i-chev"/></svg><svg class="mb-1" width="14" height="12" viewBox="0 0 14 12" fill="#c2c2c2"><path d="M0 0v5l7 7 7-7V0L7 7z"/></svg></div>
                  </div>
                </div>
              </div>
              <div class="goal-pick d-flex">
                <div class="d-flex"><label for="a1">Ziel wurde</label><select id="a1"><option>erreicht</option></select></div>
                <div class="second d-flex"><label for="b1">Ziel soll</label><select id="b1"><option>weiterentwickelt werden</option></select></div>
                <div class="third d-flex"><label for="c1">Indikator soll</label><select id="c1"><option>weiterentwickelt werden</option></select></div>
              </div>
              <div class="goal-text near d-flex">
                <div class="aim d-flex align-items-center"><label for="z2">Ziel:</label><textarea id="z2">Frau Lenzen nimmt an Veranstaltungen teil, die Kontakte mit anderen Frauen fördern und ihre soziale Teilhabe stärkt.</textarea></div>
                <div class="mark-by d-flex align-items-center"><label for="i2">Indikatior:</label><textarea id="i2">Regelmäßige Besuche der hausinternen Angebote
Anmeldung zum Tanzkurs</textarea></div>
              </div>
              <div class="goal-pick d-flex">
                <div class="d-flex"><label for="a2">Ziel wurde</label><select id="a2"><option>teilweise erreicht</option></select></div>
                <div class="second d-flex"><label for="b2">Ziel soll</label><select id="b2"><option>beibehalten werden</option></select></div>
                <div class="third d-flex"><label for="c2">Indikator soll</label><select id="c2"><option>beibehalten werden</option></select></div>
              </div>
            </fieldset>

            <fieldset class="group group-goals">
              <legend>Wohnen / Selbstversorgung</legend>
              <div class="goal-text d-flex">
                <div class="aim d-flex align-items-center"><label for="z3">Ziel:</label><textarea id="z3">Frau Lenzen bewohnt eine eigene Wohnung.</textarea></div>
                <div class="mark-by d-flex align-items-center"><label for="i3">Indikatior:</label><textarea id="i3">Abschluss eines Mietvertrages, erfolgter Umzug</textarea></div>
              </div>
              <div class="goal-pick d-flex">
                <div class="d-flex"><label for="a3">Ziel wurde</label><select id="a3"><option>teilweise erreicht</option></select></div>
                <div class="second d-flex"><label for="b3">Ziel soll</label><select id="b3"><option>beibehalten werden</option></select></div>
                <div class="third d-flex"><label for="c3">Indikator soll</label><select id="c3"><option>beibehalten werden</option></select></div>
              </div>
              <div class="goal-text near d-flex">
                <div class="aim d-flex align-items-center"><label for="z4">Ziel:</label><textarea id="z4">Sie ist in der Lage, sich im Alltag selbstständig zu versorgen</textarea></div>
                <div class="mark-by d-flex align-items-center"><label for="i4">Indikatior:</label><textarea id="i4">Frau Lenzen regelt den Einkauf des tägl. Bedarfs allein</textarea></div>
              </div>
            </fieldset>
          </form>
          <div class="sheet-scroll d-flex flex-column flex-shrink-0">
            <button class="d-flex align-items-center justify-content-center" aria-label="Nach oben"><svg width="14" height="12" fill="#5c5c5c"><use href="#i-chev"/></svg></button>
            <div class="thumb"></div>
            <button class="d-flex align-items-center justify-content-center mt-auto" aria-label="Nach unten"><svg width="14" height="12" viewBox="0 0 14 12" fill="#5c5c5c"><path d="M0 0v5l7 7 7-7V0L7 7z"/></svg></button>
          </div>
        </div>
        <div class="dialog-foot d-flex justify-content-end flex-shrink-0"><button aria-label="Nach oben klappen"><svg width="26" height="22" viewBox="0 0 26 22"><path d="M11 2q2-2 4 0l9 15q0 3-3 3H4q-3 0-2-3z" fill="url(#gSteel)" stroke="#4a545e" stroke-width="2"/><path d="M15 4l8 14H13z" fill="#5f7688" opacity=".6"/></svg></button></div>
      </div>
    </section>
  </div>
</div>
<script src="https://cdn.jsdelivr.net/npm/bootstrap@5.3.0/dist/js/bootstrap.bundle.min.js"></script>
</body>
</html>
